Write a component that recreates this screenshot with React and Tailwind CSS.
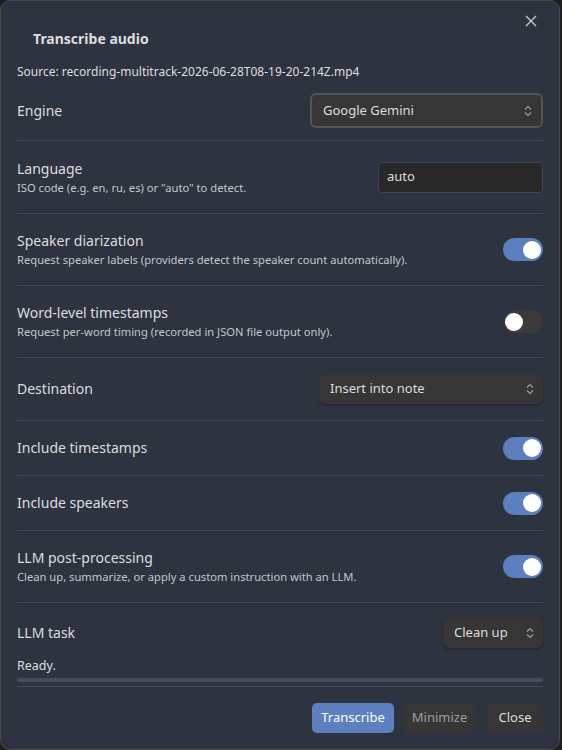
import { useState } from 'react';

const FONT = { fontFamily: '"Noto Sans", "Open Sans", Roboto, sans-serif' };

function Chevrons() {
  return (
    <svg width="8" height="12" viewBox="0 0 8 12" fill="none" stroke="#a0a0a0" strokeWidth="1.1">
      <path d="M1 4.5 L4 1.5 L7 4.5" />
      <path d="M1 7.5 L4 10.5 L7 7.5" />
    </svg>
  );
}

function Select({ value, className, focused }) {
  return (
    <div
      className={`flex items-center justify-between rounded-[6px] bg-[#363636] pl-[11px] pr-[9px] text-[13px] text-[#dcddde] ${
        focused ? 'border-2 border-[#555555]' : 'shadow-[0_1px_2px_rgba(0,0,0,0.35)]'
      } ${className}`}
    >
      <span>{value}</span>
      <Chevrons />
    </div>
  );
}

function Toggle({ on }) {
  return (
    <div
      className={`flex h-[23px] w-[40px] items-center rounded-full px-[2px] ${
        on ? 'justify-end bg-[#5b7fbf]' : 'justify-start bg-[#3a3a3a]'
      }`}
    >
      <div className="h-[18px] w-[18px] rounded-full bg-white" />
    </div>
  );
}

function Row({ name, desc, h, children, first }) {
  return (
    <div
      className={`flex items-center justify-between ${first ? '' : 'border-t border-[#414857]'}`}
      style={{ height: h }}
    >
      <div className="flex flex-col">
        <div className="text-[14px] leading-[20px] text-[#dcddde]">{name}</div>
        {desc && <div className="mt-[1px] text-[11.2px] leading-[16px] text-[#c3c6cc]">{desc}</div>}
      </div>
      {children}
    </div>
  );
}

export default function App() {
  const [lang] = useState('auto');

  return (
    <div className="h-[750px] w-[562px] bg-[#1e1e1e]" style={FONT}>
      <div className="relative flex h-[750px] w-[560px] flex-col rounded-[10px] border border-[#4a4a4a] bg-[#2e3340] px-[16px]">
        <button className="absolute right-[21px] top-[13px] text-[#c8c8c8]">
          <svg width="14" height="14" viewBox="0 0 14 14" stroke="currentColor" strokeWidth="1.4">
            <path d="M2 2 L12 12 M12 2 L2 12" />
          </svg>
        </button>

        <div className="pl-[16px] pt-[28px] text-[14px] font-bold leading-[20px] text-[#dcddde]">
          Transcribe audio
        </div>
        <div className="mt-[14px] text-[12px] leading-[18px] text-[#dcddde]">
          Source: recording-multitrack-2026-06-28T08-19-20-214Z.mp4
        </div>

        <Row name="Engine" h={59} first>
          <Select value="Google Gemini" className="h-[35px] w-[233px]" focused />
        </Row>
        <Row name="Language" desc={'ISO code (e.g. en, ru, es) or "auto" to detect.'} h={73}>
          <div className="flex h-[31px] w-[165px] items-center rounded-[4px] border border-[#3c4557] bg-[#282828] px-[8px] text-[13px] text-[#dcddde]">
            {lang}
          </div>
        </Row>
        <Row
          name="Speaker diarization"
          desc="Request speaker labels (providers detect the speaker count automatically)."
          h={72}
        >
          <Toggle on />
        </Row>
        <Row
          name="Word-level timestamps"
          desc="Request per-word timing (recorded in JSON file output only)."
          h={72}
        >
          <Toggle on={false} />
        </Row>
        <Row name="Destination" h={63}>
          <Select value="Insert into note" className="h-[30px] w-[224px]" />
        </Row>
        <Row name="Include timestamps" h={55}>
          <Toggle on />
        </Row>
        <Row name="Include speakers" h={55}>
          <Toggle on />
        </Row>
        <Row
          name="LLM post-processing"
          desc="Clean up, summarize, or apply a custom instruction with an LLM."
          h={72}
        >
          <Toggle on />
        </Row>
        <Row name="LLM task" h={60}>
          <Select value="Clean up" className="h-[30px] w-[100px]" />
        </Row>

        <div className="mt-[-5px] text-[12.5px] leading-[18px] text-[#dcddde]">Ready.</div>
        <div className="mt-[3px] h-[4px] rounded-full bg-[#434c5e]" />
        <div className="mt-[4px] border-t border-[#414857]" />

        <div className="mt-[16px] flex justify-end gap-[10px] text-[13px]">
          <button className="h-[30px] w-[82px] rounded-[5px] bg-[#5b7fbf] text-white">Transcribe</button>
          <button className="h-[30px] w-[71px] rounded-[5px] bg-[#363636] text-[#9a9da3]">Minimize</button>
          <button className="ml-[2px] h-[30px] w-[56px] rounded-[5px] bg-[#363636] text-[#dcddde]">Close</button>
        </div>
      </div>
    </div>
  );
}
